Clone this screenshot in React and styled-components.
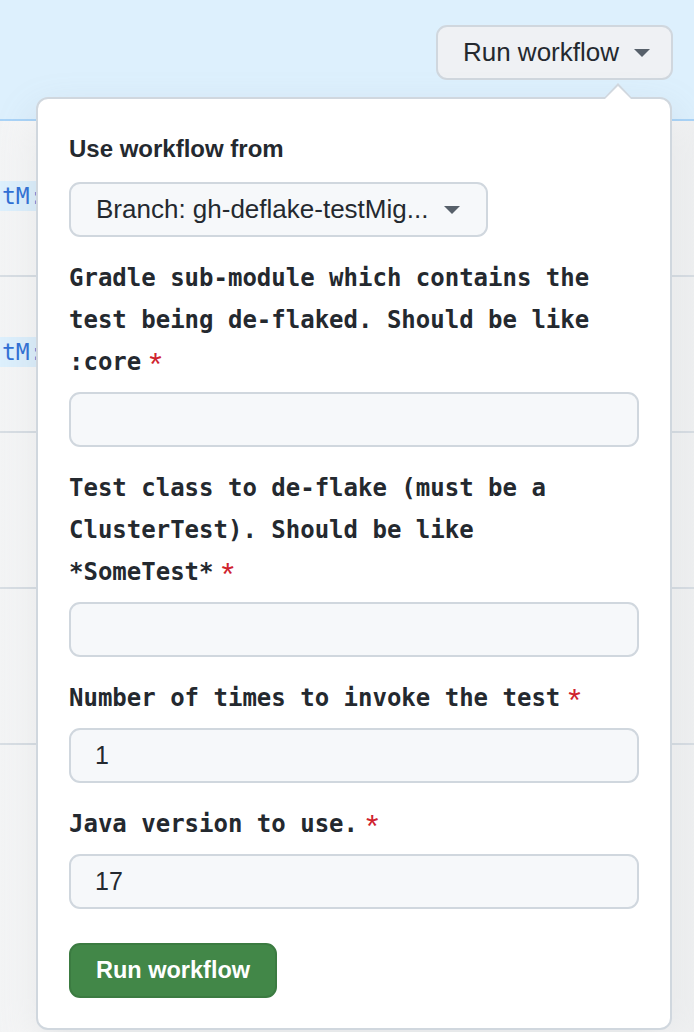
import React from 'react';
import styled, { createGlobalStyle } from 'styled-components';

const GlobalStyle = createGlobalStyle`
  html, body {
    margin: 0;
    padding: 0;
    background: #ffffff;
  }
  body {
    font-family: "Liberation Sans", Arial, sans-serif;
    color: #24292f;
  }
`;

const sans = `"Liberation Sans", Arial, sans-serif`;
const mono = `"DejaVu Sans Mono", "Liberation Mono", monospace`;

const Page = styled.div`
  position: relative;
  width: 694px;
  height: 1032px;
  overflow: hidden;
  display: flex;
  flex-direction: column;
  background: #ffffff;
`;

const Header = styled.div`
  flex: 0 0 121px;
  background: #ddf0fd;
  border-bottom: 2px solid #a9d3f7;
  display: flex;
  justify-content: flex-end;
  align-items: flex-start;
  padding: 25px 21px 0 0;
  box-sizing: border-box;
`;

const Caret = styled.span`
  display: inline-block;
  width: 0;
  height: 0;
  border-left: 8px solid transparent;
  border-right: 8px solid transparent;
  border-top: 8px solid #57606a;
  margin-left: ${(p) => p.$gap || 14}px;
`;

const DispatchButton = styled.button`
  display: flex;
  align-items: center;
  height: 55px;
  padding: 0 21px 0 25px;
  background: #eff1f4;
  border: 2px solid #d0d7de;
  border-radius: 11px;
  font-family: ${sans};
  font-size: 26px;
  color: #24292f;
  cursor: pointer;
`;

const RunList = styled.div`
  flex: 1;
  display: flex;
  flex-direction: column;
  background: linear-gradient(90deg, #f3f4f5 0px, #fafafa 36px, #fafafa 660px, #f0f1f2 694px);
`;

const RunRow = styled.div`
  flex: 0 0 156px;
  border-bottom: 2px solid #d8dee4;
  display: flex;
  align-items: flex-start;
  padding-top: ${(p) => p.$codeTop}px;
  box-sizing: border-box;
`;

const BranchCode = styled.span`
  font-family: ${mono};
  font-size: 23px;
  line-height: 30px;
  color: #2f6fd6;
  background: #ddf0fd;
  padding: 0 2px;
  white-space: nowrap;
`;

const Popover = styled.div`
  position: absolute;
  top: 97px;
  left: 36px;
  width: 636px;
  box-sizing: border-box;
  background: #ffffff;
  border: 2px solid #d0d7de;
  border-radius: 12px;
  padding: 29px 31px 30px;
  box-shadow: 0 16px 40px rgba(140, 149, 159, 0.22);
  display: flex;
  flex-direction: column;

  &::before,
  &::after {
    content: '';
    position: absolute;
    left: 565px;
    width: 0;
    height: 0;
    border-left: 15px solid transparent;
    border-right: 15px solid transparent;
  }
  &::before {
    top: -16px;
    border-bottom: 16px solid #d0d7de;
  }
  &::after {
    top: -13px;
    left: 566px;
    border-left-width: 14px;
    border-right-width: 14px;
    border-bottom: 14px solid #ffffff;
  }
`;

const Heading = styled.div`
  font-family: ${sans};
  font-weight: 700;
  font-size: 24px;
  line-height: 42px;
  color: #24292f;
`;

const BranchSelect = styled.button`
  margin-top: 12px;
  align-self: flex-start;
  display: flex;
  align-items: center;
  justify-content: space-between;
  width: 419px;
  height: 55px;
  padding: 0 26px 0 25px;
  background: #f6f8fa;
  border: 2px solid #d0d7de;
  border-radius: 11px;
  font-family: ${sans};
  font-size: 26px;
  color: #24292f;
  white-space: nowrap;
  cursor: pointer;
`;

const Field = styled.div`
  display: flex;
  flex-direction: column;
  margin-top: 20px;
`;

const Label = styled.label`
  font-family: ${mono};
  font-weight: 700;
  font-size: 24px;
  line-height: 42px;
  color: #24292f;
  max-width: 552px;
`;

const Required = styled.span`
  font-family: ${sans};
  font-weight: 400;
  font-size: 32px;
  line-height: 0;
  color: #cf222e;
  margin-left: 8px;
  position: relative;
  top: 5px;
`;

const TextInput = styled.input`
  margin-top: 9px;
  height: 55px;
  box-sizing: border-box;
  padding: 0 24px;
  background: #f6f8fa;
  border: 2px solid #d0d7de;
  border-radius: 11px;
  font-family: ${sans};
  font-size: 25px;
  color: #24292f;
  outline: none;
`;

const SubmitButton = styled.button`
  margin-top: 34px;
  align-self: flex-start;
  height: 55px;
  padding: 0 25px;
  background: #428748;
  border: 2px solid #3b7b41;
  border-radius: 11px;
  font-family: ${sans};
  font-weight: 700;
  font-size: 23.5px;
  color: #ffffff;
  cursor: pointer;
`;

const fields = [
  { label: 'Gradle sub-module which contains the test being de-flaked. Should be like :core', value: '' },
  { label: 'Test class to de-flake (must be a ClusterTest). Should be like *SomeTest*', value: '' },
  { label: 'Number of times to invoke the test', value: '1' },
  { label: 'Java version to use.', value: '17' },
];

export default function App() {
  return (
    <Page>
      <GlobalStyle />
      <Header>
        <DispatchButton type="button">
          Run workflow
          <Caret $gap={15} />
        </DispatchButton>
      </Header>
      <RunList>
        <RunRow $codeTop={60}>
          <BranchCode>tM:</BranchCode>
        </RunRow>
        <RunRow $codeTop={60}>
          <BranchCode>tM:</BranchCode>
        </RunRow>
        <RunRow $codeTop={0} />
        <RunRow $codeTop={0} />
      </RunList>

      <Popover>
        <Heading>Use workflow from</Heading>
        <BranchSelect type="button">
          <span>Branch: gh-deflake-testMig...</span>
          <Caret />
        </BranchSelect>
        {fields.map((f) => (
          <Field key={f.label}>
            <Label>
              {f.label}
              <Required>*</Required>
            </Label>
            <TextInput type="text" defaultValue={f.value} />
          </Field>
        ))}
        <SubmitButton type="button">Run workflow</SubmitButton>
      </Popover>
    </Page>
  );
}
